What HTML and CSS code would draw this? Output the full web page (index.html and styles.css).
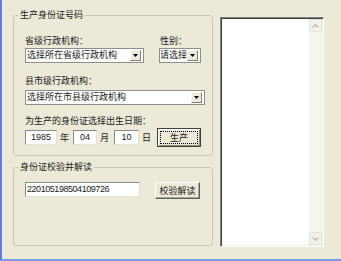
FILE: index.html
```html
<!DOCTYPE html>
<html lang="zh-CN">
<head>
  <meta charset="UTF-8" />
  <title>身份证号码生产与校验</title>
  <link rel="stylesheet" href="styles.css">
</head>
<body>
  <div class="window">
    <div class="left">
      <fieldset class="group group-make">
        <legend>生产身份证号码</legend>
        <div class="row-top">
          <div class="col-prov">
            <div class="label">省级行政机构：</div>
            <div class="combo">
              <span class="combo-text">选择所在省级行政机构</span>
              <span class="combo-btn"><svg width="5" height="3" viewBox="0 0 5 3"><path d="M0 0h5L2.5 3z" fill="#000"/></svg></span>
            </div>
          </div>
          <div class="col-sex">
            <div class="label">性别：</div>
            <div class="combo combo-sex">
              <span class="combo-text">请选择</span>
              <span class="combo-btn"><svg width="5" height="3" viewBox="0 0 5 3"><path d="M0 0h5L2.5 3z" fill="#000"/></svg></span>
            </div>
          </div>
        </div>
        <div class="label label-city">县市级行政机构：</div>
        <div class="combo combo-city">
          <span class="combo-text">选择所在市县级行政机构</span>
          <span class="combo-btn"><svg width="5" height="3" viewBox="0 0 5 3"><path d="M0 0h5L2.5 3z" fill="#000"/></svg></span>
        </div>
        <div class="label label-date">为生产的身份证选择出生日期：</div>
        <div class="date-row">
          <div class="field field-year">1985</div>
          <span class="unit">年</span>
          <div class="field field-month">04</div>
          <span class="unit">月</span>
          <div class="field field-day">10</div>
          <span class="unit">日</span>
          <button class="btn btn-default">生产</button>
        </div>
      </fieldset>

      <fieldset class="group group-check">
        <legend>身份证校验并解读</legend>
        <div class="check-row">
          <div class="field field-id">220105198504109726</div>
          <button class="btn btn-check">校验解读</button>
        </div>
      </fieldset>
    </div>

    <div class="output">
      <div class="output-body"></div>
      <div class="scrollbar">
        <span class="sb-btn"><svg width="7" height="4" viewBox="0 0 7 4"><path d="M0.5 3.5L3.5 0.8L6.5 3.5" fill="none" stroke="#b9b9ae" stroke-width="1.2"/></svg></span>
        <span class="sb-track"></span>
        <span class="sb-btn"><svg width="7" height="4" viewBox="0 0 7 4"><path d="M0.5 0.5L3.5 3.2L6.5 0.5" fill="none" stroke="#b9b9ae" stroke-width="1.2"/></svg></span>
      </div>
    </div>
  </div>
</body>
</html>
```

FILE: styles.css
```css
body {
  margin: 0;
  background-color: #ece9d8;
  color: #1a1a1a;
  font-family: "Liberation Sans", "Noto Sans CJK SC", sans-serif;
  font-size: 9px;
}

.window {
  width: 341px;
  height: 261px;
  box-sizing: border-box;
  background-color: #ece9d8;
  border-left: 2px solid #5b7fdc;
  border-bottom: 2px solid #7d9be2;
  display: flex;
  padding: 9px 0 0 11px;
  gap: 7px;
}

.left {
  width: 200px;
  display: flex;
  flex-direction: column;
  gap: 5px;
}

.group {
  margin: 0;
  padding: 0 11px 8px;
  border: 1px solid #c9c6b6;
  border-radius: 3px;
  min-width: 0;
  box-sizing: border-box;
}

.group legend {
  font-size: 9px;
  line-height: 12px;
  padding: 0 2px;
  margin-left: -7px;
}

.group-check {
  height: 85px;
}

.label {
  line-height: 12px;
  white-space: nowrap;
}

.row-top {
  display: flex;
  gap: 15px;
  margin-top: 14px;
}

.row-top .label {
  margin-bottom: 1px;
}

.col-prov {
  width: 122px;
}

.col-sex {
  width: 42px;
}

.col-sex .label {
  padding-left: 1px;
}

.combo {
  height: 15px;
  box-sizing: border-box;
  background: #fff;
  border: 1px solid #8e8e8e;
  display: flex;
  align-items: center;
  padding: 0 2px 0 1px;
}

.combo-text {
  flex: 1;
  line-height: 13px;
  white-space: nowrap;
  overflow: hidden;
}

.combo-btn {
  width: 11px;
  height: 11px;
  box-sizing: border-box;
  border: 1px solid;
  border-color: #fff #808080 #808080 #fff;
  background: #ece9d8;
  display: flex;
  align-items: center;
  justify-content: center;
}

.combo-sex .combo-text {
  direction: rtl;
  text-align: left;
}

.label-city {
  margin-top: 12px;
}

.combo-city {
  width: 180px;
  margin-top: 3px;
}

.label-date {
  margin-top: 10px;
}

.date-row {
  display: flex;
  align-items: center;
  height: 19px;
  margin-top: 1px;
}

.field {
  height: 15px;
  box-sizing: border-box;
  background: #fff;
  border: 1px solid;
  border-color: #8a8a8a #e4e2d6 #e4e2d6 #8a8a8a;
  line-height: 13px;
  text-align: center;
  white-space: nowrap;
}

.field-year {
  width: 32px;
}

.field-month {
  width: 24px;
}

.field-day {
  width: 25px;
}

.unit {
  width: 9px;
  margin: 0 4px 0 3px;
  line-height: 12px;
}

.date-row .unit:nth-of-type(2) {
  margin-right: 5px;
}

.date-row .unit:last-of-type {
  margin-right: 6px;
}

.btn {
  font-family: inherit;
  font-size: 9px;
  color: #1a1a1a;
  background: #ece9d8;
  padding: 0;
  box-sizing: border-box;
  border: 1px solid;
  border-color: #fff #5e5e5e #5e5e5e #fff;
  box-shadow: inset -1px -1px 0 #a8a698;
}

.btn-default {
  width: 44px;
  height: 19px;
  border-color: #404040;
  box-shadow: inset 1px 1px 0 #fff, inset -1px -1px 0 #8c8a7e;
  outline: 1px dotted #000;
  outline-offset: -4px;
}

.check-row {
  display: flex;
  align-items: flex-start;
  margin-top: 9px;
}

.field-id {
  width: 115px;
  text-align: left;
  padding-left: 1px;
  letter-spacing: -0.45px;
}

.btn-check {
  width: 45px;
  height: 17px;
  margin-left: 15px;
}

.output {
  width: 104px;
  height: 230px;
  margin-top: 8px;
  box-sizing: border-box;
  border: 1px solid;
  border-color: #7f7f7f #fff #fff #7f7f7f;
  box-shadow: inset 1px 1px 0 #404040, inset -1px -1px 0 #f1efe2;
  display: flex;
  padding: 1px;
}

.output-body {
  flex: 1;
  background: #fff;
}

.scrollbar {
  width: 13px;
  display: flex;
  flex-direction: column;
  background: #f6f5ee;
}

.sb-btn {
  height: 13px;
  display: flex;
  align-items: center;
  justify-content: center;
  background: #f3f2ea;
  border: 1px solid #e6e4d8;
  box-sizing: border-box;
}

.sb-track {
  flex: 1;
}
```
